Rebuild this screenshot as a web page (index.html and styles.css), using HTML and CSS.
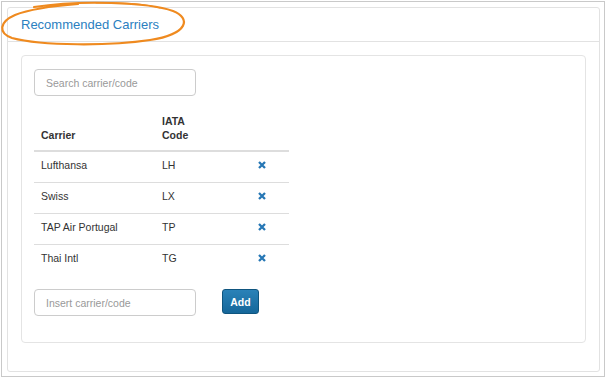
FILE: index.html
```html
<!DOCTYPE html>
<html lang="en">
  <head>
    <meta charset="UTF-8" />
    <title>Recommended Carriers</title>
    <link rel="stylesheet" href="styles.css">
  </head>
  <body>
    <div class="frame">
      <div class="panel">
        <div class="panel-heading">Recommended Carriers</div>
        <div class="panel-body">
          <div class="well">
            <input type="text" class="field" placeholder="Search carrier/code" />

            <table class="carriers">
              <colgroup>
                <col class="col-name" />
                <col class="col-code" />
                <col class="col-action" />
              </colgroup>
              <thead>
                <tr>
                  <th>Carrier</th>
                  <th>IATA Code</th>
                  <th></th>
                </tr>
              </thead>
              <tbody>
                <tr>
                  <td>Lufthansa</td>
                  <td>LH</td>
                  <td class="action"><svg class="remove" viewBox="0 0 8 8"><path d="M1 1L7 7M7 1L1 7" /></svg></td>
                </tr>
                <tr>
                  <td>Swiss</td>
                  <td>LX</td>
                  <td class="action"><svg class="remove" viewBox="0 0 8 8"><path d="M1 1L7 7M7 1L1 7" /></svg></td>
                </tr>
                <tr>
                  <td>TAP Air Portugal</td>
                  <td>TP</td>
                  <td class="action"><svg class="remove" viewBox="0 0 8 8"><path d="M1 1L7 7M7 1L1 7" /></svg></td>
                </tr>
                <tr>
                  <td>Thai Intl</td>
                  <td>TG</td>
                  <td class="action"><svg class="remove" viewBox="0 0 8 8"><path d="M1 1L7 7M7 1L1 7" /></svg></td>
                </tr>
              </tbody>
            </table>

            <div class="add-row">
              <input type="text" class="field" placeholder="Insert carrier/code" />
              <button class="btn-add">Add</button>
            </div>
          </div>
        </div>
      </div>
    </div>

    <!-- hand-drawn highlight round the title -->
    <svg class="scribble" viewBox="0 0 190 48">
      <path d="M34 7 C80 0, 148 2, 173 11 C191 18, 189 34, 150 40 C110 46, 42 46, 12 38 C-2 33, -1 22, 15 15 C30 9, 52 6, 78 4" />
      <path class="tail" d="M96 3 C124 2, 146 4, 160 8" />
    </svg>
  </body>
</html>
```

FILE: styles.css
```css
body {
  margin: 0;
  font-family: "Liberation Sans", Arial, sans-serif;
  font-size: 10.5px;
  color: #333;
  background-color: #fff;
}
.frame {
  margin: 1px 0 0 1px;
  width: 604px;
  height: 376px;
  box-sizing: border-box;
  border: 1px solid #c9c9c9;
  padding: 5px 4px 4px 5px;
}
.panel {
  height: 100%;
  box-sizing: border-box;
  border: 1px solid #e2e2e2;
  border-radius: 3px;
  display: flex;
  flex-direction: column;
}
.panel-heading {
  height: 33px;
  line-height: 33px;
  padding: 0 13px;
  font-size: 13px;
  color: #2b80bf;
  border-bottom: 1px solid #e2e2e2;
}
.panel-body {
  padding: 13px 13px 0 13px;
}
.well {
  border: 1px solid #e4e4e4;
  border-radius: 4px;
  padding: 13px 12px 26px 12px;
}
.field {
  display: block;
  width: 162px;
  height: 27px;
  box-sizing: border-box;
  border: 1px solid #ccc;
  border-radius: 4px;
  padding: 0 11px;
  font-family: inherit;
  font-size: 10.5px;
  color: #555;
  margin: 0;
}
.field::placeholder {
  color: #999;
}
.carriers {
  margin-top: 10px;
  width: 255px;
  table-layout: fixed;
  border-collapse: collapse;
}
.col-name {
  width: 121px;
}
.col-code {
  width: 62px;
}
.col-action {
  width: 72px;
}
.carriers th,
.carriers td {
  padding: 8px 7px;
  line-height: 14px;
  text-align: left;
  vertical-align: bottom;
}
.carriers th {
  font-weight: bold;
  border-bottom: 2px solid #ddd;
}
.carriers td {
  padding: 6px 7px 10px 7px;
  vertical-align: top;
  border-top: 1px solid #ddd;
}
.carriers tbody tr:first-child td {
  border-top: none;
}
.carriers td.action {
  padding-left: 41px;
}
.remove {
  display: block;
  width: 8px;
  height: 8px;
  margin-top: 3px;
}
.remove path {
  fill: none;
  stroke: #2677b5;
  stroke-width: 2.3;
}
.add-row {
  display: flex;
  align-items: flex-start;
  gap: 26px;
  margin-top: 14px;
}
.btn-add {
  width: 37px;
  height: 25px;
  padding: 0;
  border: 1px solid #0f557f;
  border-radius: 3px;
  background: linear-gradient(#2a82b8, #16679a);
  color: #fff;
  font-family: inherit;
  font-size: 10.5px;
  font-weight: bold;
  cursor: pointer;
}
.scribble {
  position: absolute;
  left: 0;
  top: 0;
  width: 190px;
  height: 48px;
  overflow: visible;
}
.scribble path {
  fill: none;
  stroke: #ef8a1f;
  stroke-width: 2.2;
  stroke-linecap: round;
}
.scribble .tail {
  stroke-width: 1;
}
```
